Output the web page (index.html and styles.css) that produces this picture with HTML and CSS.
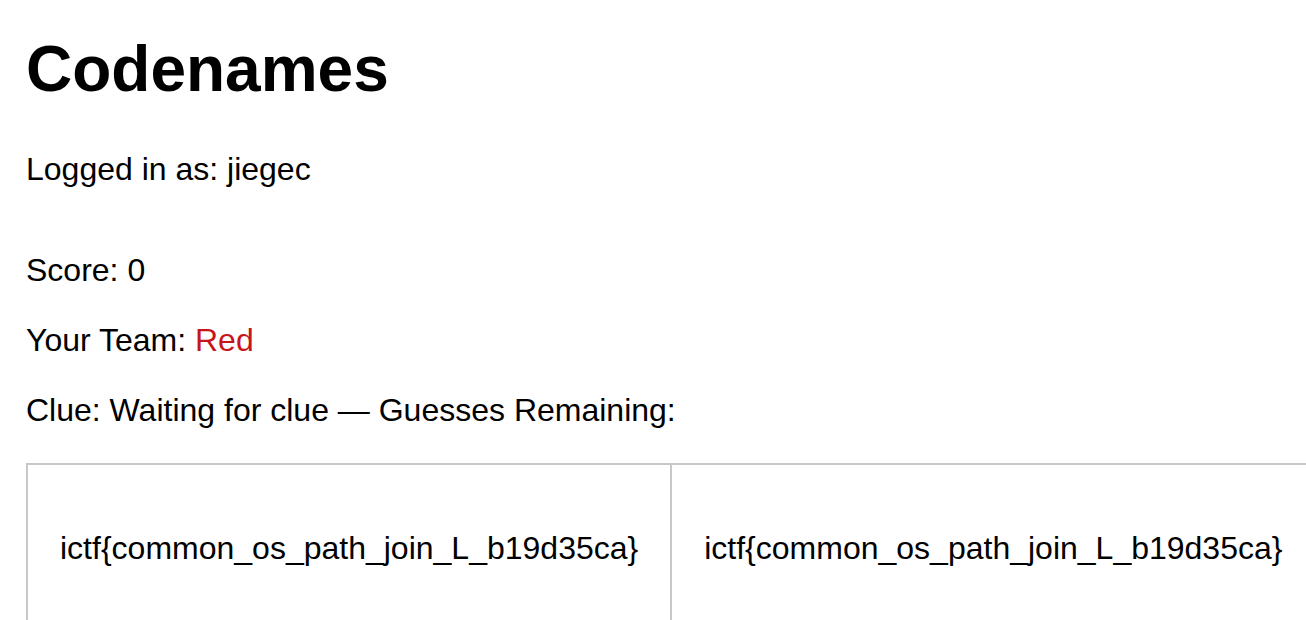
FILE: index.html
```html
<!DOCTYPE html>
<html>
<head>
<meta charset="utf-8">
<title>Codenames</title>
<link rel="stylesheet" href="styles.css">
</head>
<body>
<h1 class="title">Codenames</h1>
<p class="line user">Logged in as: jiegec</p>
<div class="game">
  <p class="line">Score: 0</p>
  <p class="line">Your Team: <span class="team-red">Red</span></p>
  <p class="line">Clue: Waiting for clue — Guesses Remaining: </p>
  <table class="board">
    <tr>
      <td class="card">ictf{common_os_path_join_L_b19d35ca}</td>
      <td class="card">ictf{common_os_path_join_L_b19d35ca}</td>
    </tr>
  </table>
</div>
</body>
</html>
```
FILE: styles.css
```css
html, body {
  margin: 0;
  padding: 0;
  background: #fff;
}
body {
  padding: 32px 0 0 26px;
  font-family: "Liberation Sans", Arial, Helvetica, sans-serif;
  color: #000;
  font-size: 32px;
  overflow: hidden;
}
.title {
  margin: 0;
  font-size: 64px;
  line-height: 74px;
  font-weight: 700;
}
.line {
  margin: 0;
  line-height: 37px;
}
.user {
  margin-top: 45px;
}
.game {
  margin-top: 64px;
  display: flex;
  flex-direction: column;
  gap: 33px;
}
.team-red {
  color: #c8141a;
}
.board {
  margin-top: 1px;
  border-collapse: collapse;
}
.card {
  border: 2px solid #c8c8c8;
  padding: 65px 32px;
  text-align: center;
  white-space: nowrap;
  line-height: 37px;
}
```
